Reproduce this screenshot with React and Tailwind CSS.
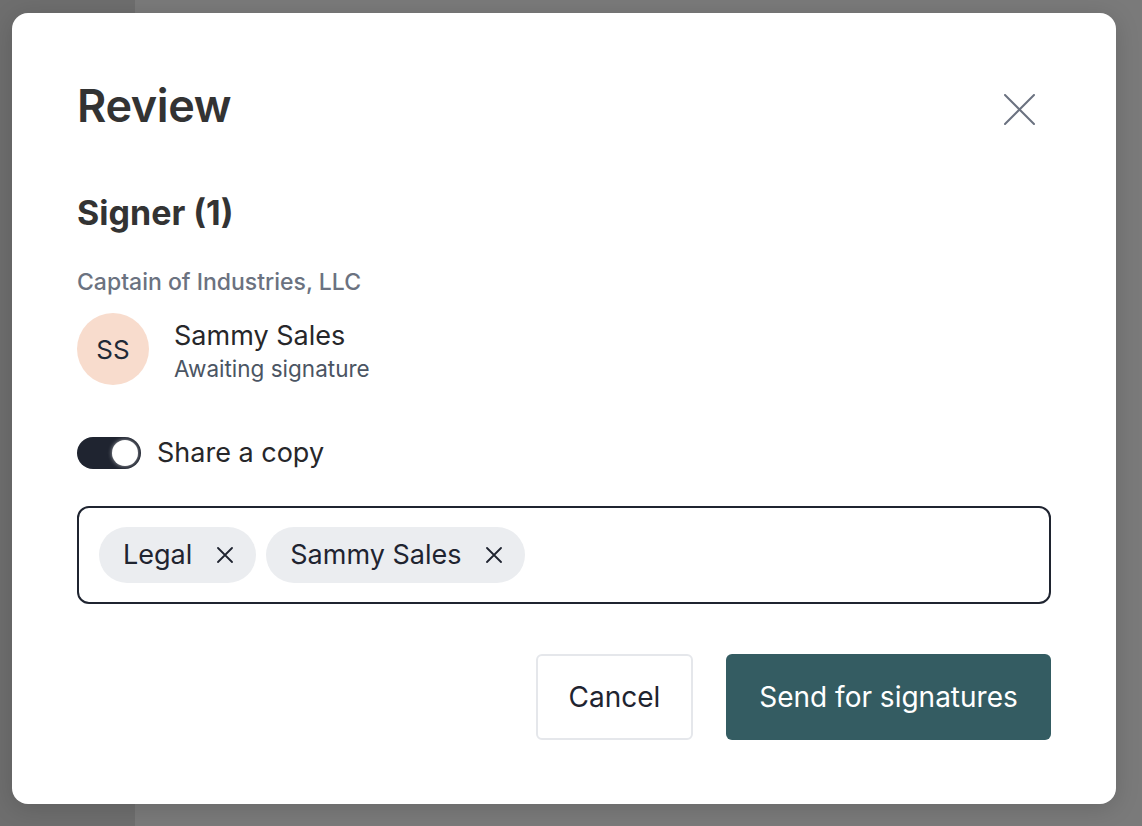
export default function App() {
  const font = { fontFamily: "Inter, 'Noto Sans', sans-serif" };
  return (
    <div className="relative flex h-[826px] w-full overflow-hidden bg-[#7a7a7a]" style={font}>
      <div className="w-[135px] bg-[#6e6e6e]" />
      <div className="flex-1 bg-[#7a7a7a]" />

      <div className="absolute left-[12px] top-[13px] flex h-[791px] w-[1104px] flex-col rounded-[16px] bg-white px-[65px] pt-[65px] pb-[64px] shadow-[0_4px_24px_rgba(0,0,0,0.15)] [&>*]:shrink-0">
        <div className="flex h-[56px] items-center justify-between">
          <h1 className="text-[45px] font-semibold leading-[56px] tracking-[-0.4px] text-[#333333]">Review</h1>
          <button className="mr-[16px] mt-[6px] text-[#6b7280]">
            <svg width="31" height="31" viewBox="0 0 31 31" fill="none" stroke="currentColor" strokeWidth="2" strokeLinecap="round">
              <path d="M1 1L30 30M30 1L1 30" />
            </svg>
          </button>
        </div>

        <h2 className="mt-[59px] text-[34px] font-bold leading-[40px] text-[#333333]">Signer (1)</h2>
        <div className="mt-[35px] text-[23px] font-medium leading-[28px] text-[#6b7280]">Captain of Industries, LLC</div>

        <div className="mt-[17px] flex h-[72px] items-start gap-[25px]">
          <div className="flex h-[72px] w-[72px] shrink-0 items-center justify-center rounded-full bg-[#f8dccd] text-[26px] text-[#1f2937]">
            SS
          </div>
          <div className="flex flex-col pt-[5px]">
            <span className="text-[27px] leading-[36px] text-[#27272a]">Sammy Sales</span>
            <span className="text-[22.5px] leading-[30px] text-[#4b5563]">Awaiting signature</span>
          </div>
        </div>

        <div className="mt-[52px] flex h-[32px] items-center gap-[16px]">
          <div className="flex h-[32px] w-[64px] items-center justify-end rounded-full bg-[#1f2430] px-[3px]">
            <div className="h-[26px] w-[26px] rounded-full bg-white shadow-[0_0_4px_rgba(255,255,255,0.6)]" />
          </div>
          <span className="text-[27px] leading-[32px] text-[#27272a]">Share a copy</span>
        </div>

        <div className="mt-[37px] flex h-[98px] items-center gap-[10px] rounded-[12px] border-2 border-[#1f2430] px-[20px]">
          {["Legal", "Sammy Sales"].map((t) => (
            <div key={t} className="flex h-[56px] items-center gap-[25px] rounded-full bg-[#ebedf0] pl-[24px] pr-[23px]">
              <span className="text-[27px] text-[#1f2430]">{t}</span>
              <svg width="16" height="16" viewBox="0 0 16 16" fill="none" stroke="#1f2430" strokeWidth="1.8" strokeLinecap="round">
                <path d="M1 1L15 15M15 1L1 15" />
              </svg>
            </div>
          ))}
        </div>

        <div className="mt-[50px] flex justify-end gap-[33px]">
          <button className="h-[86px] w-[157px] rounded-[6px] border-2 border-[#e5e7eb] bg-white text-[28px] text-[#1f2430]">
            Cancel
          </button>
          <button className="h-[86px] w-[325px] rounded-[6px] bg-[#345c62] text-[28px] text-white">
            Send for signatures
          </button>
        </div>
      </div>
    </div>
  );
}
